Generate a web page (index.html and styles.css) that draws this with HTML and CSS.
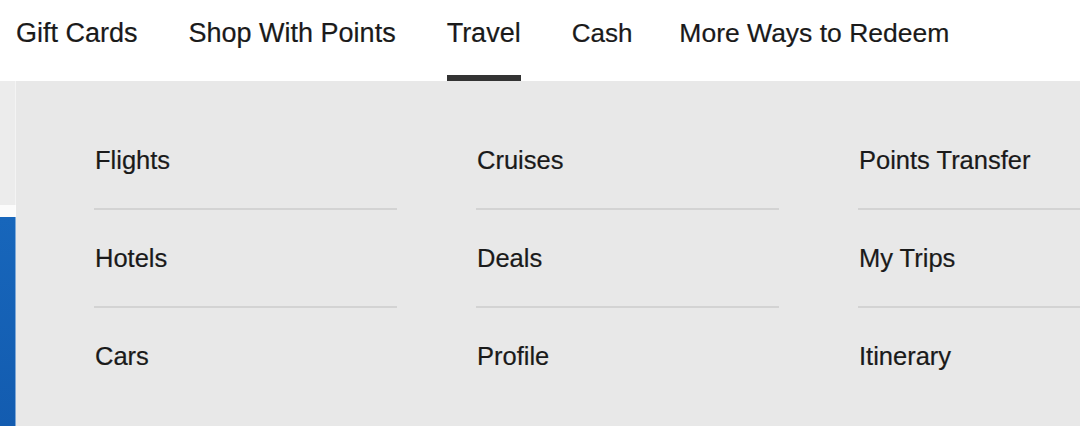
FILE: index.html
```html
<!DOCTYPE html>
<html lang="en">
<head>
<meta charset="utf-8">
<title>Travel menu</title>
<link rel="stylesheet" href="styles.css">
</head>
<body>
<header class="topnav">
  <nav class="nav-list">
    <a class="nav-item">Gift Cards</a>
    <a class="nav-item">Shop With Points</a>
    <a class="nav-item active">Travel</a>
    <a class="nav-item">Cash</a>
    <a class="nav-item">More Ways to Redeem</a>
  </nav>
</header>
<main class="page">
  <section class="page-top"></section>
  <section class="page-band"></section>
  <section class="page-hero"></section>
  <div class="dropdown">
    <ul class="menu-col">
      <li class="menu-item">Flights</li>
      <li class="menu-item">Hotels</li>
      <li class="menu-item">Cars</li>
    </ul>
    <ul class="menu-col">
      <li class="menu-item">Cruises</li>
      <li class="menu-item">Deals</li>
      <li class="menu-item">Profile</li>
    </ul>
    <ul class="menu-col wide">
      <li class="menu-item">Points Transfer</li>
      <li class="menu-item">My Trips</li>
      <li class="menu-item">Itinerary</li>
    </ul>
  </div>
</main>
</body>
</html>
```

FILE: styles.css
```css
* { box-sizing: border-box; }
html, body {
  margin: 0;
  padding: 0;
  width: 1080px;
  height: 426px;
  overflow: hidden;
  background: #ffffff;
  font-family: "Liberation Sans", Arial, sans-serif;
  color: #1a1a1a;
}
.topnav {
  height: 81px;
  background: #ffffff;
  padding-left: 16px;
}
.nav-list {
  display: flex;
  gap: 51px;
  height: 100%;
}
.nav-item {
  position: relative;
  font-size: 27px;
  line-height: 1;
  padding-top: 20px;
  color: #1a1a1a;
  white-space: nowrap;
  -webkit-text-stroke: 0.2px #1a1a1a;
}
.nav-item:nth-child(5) { margin-left: -4px; font-size: 26.5px; }
.nav-item:nth-child(4) { font-size: 26px; }
.nav-item.active::after {
  content: "";
  position: absolute;
  left: 0;
  right: 0;
  bottom: 0;
  height: 6px;
  background: #333333;
}
.page {
  position: relative;
  height: 345px;
  display: flex;
  flex-direction: column;
}
.page-top {
  height: 124px;
  background: #ececec;
}
.page-band {
  height: 12px;
  background: #fbfbfb;
}
.page-hero {
  flex: 1;
  background: linear-gradient(180deg, #1766bb 0%, #135cb0 100%);
}
.dropdown {
  position: absolute;
  left: 16px;
  top: 0;
  bottom: 0;
  width: 1200px;
  background: #e8e8e8;
  box-shadow: -1px 0 0 rgba(255,255,255,0.45);
  display: flex;
  gap: 79px;
  padding-left: 78px;
  padding-top: 31px;
}
.menu-col {
  list-style: none;
  margin: 0;
  padding: 0;
  width: 303px;
  flex: none;
}
.menu-col.wide { width: 420px; }
.menu-item {
  height: 98px;
  line-height: 96px;
  font-size: 25.5px;
  padding-left: 1px;
  border-bottom: 2px solid #d3d3d3;
  white-space: nowrap;
  -webkit-text-stroke: 0.2px #1a1a1a;
}
.menu-item:last-child { border-bottom: none; }
```
